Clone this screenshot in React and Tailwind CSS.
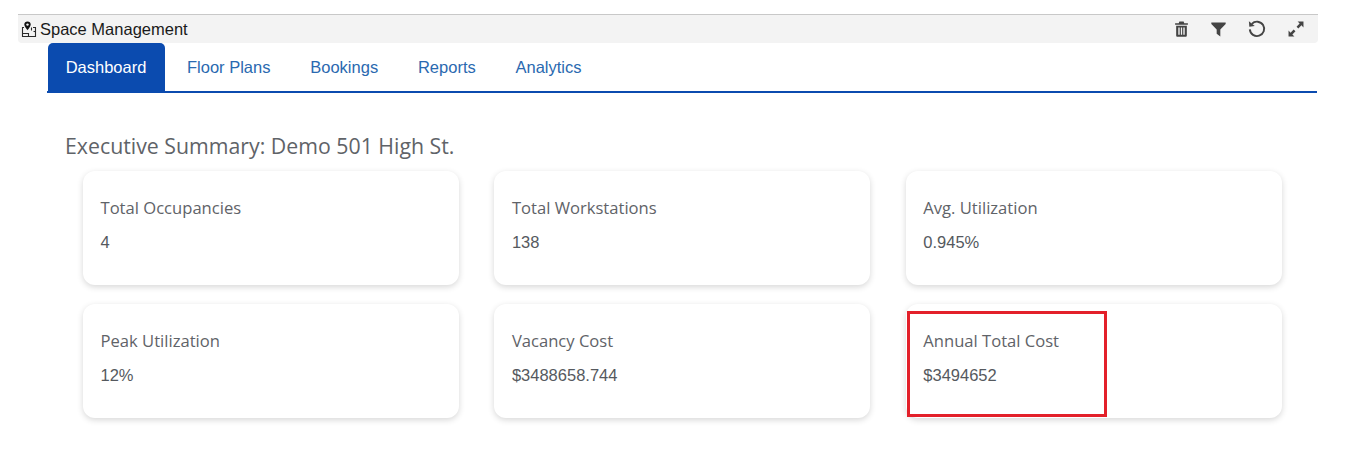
import * as React from "react";

// data
const cards = [
  { label: "Total Occupancies", value: "4" },
  { label: "Total Workstations", value: "138" },
  { label: "Avg. Utilization", value: "0.945%" },
  { label: "Peak Utilization", value: "12%" },
  { label: "Vacancy Cost", value: "$3488658.744" },
  { label: "Annual Total Cost", value: "$3494652", marked: true },
];

const tabs = ["Floor Plans", "Bookings", "Reports", "Analytics"];

const SpaceIcon = () => (
  <svg width="16" height="17" viewBox="0 0 16 17" fill="none" stroke="#2b2b2b" strokeWidth="1.1">
    <path d="M3 6.5H1.5V15.5H14.5V6.5H12" />
    <path d="M1.5 12.5H7.5V15.5" />
    <path d="M10.5 9.5V6.5" />
    <path d="M12.5 10.5H14.5" />
    <path
      d="M6.5 0.5C4.6 0.5 3.3 1.8 3.3 3.6C3.3 5.7 6.5 9.2 6.5 9.2C6.5 9.2 9.7 5.7 9.7 3.6C9.7 1.8 8.4 0.5 6.5 0.5Z"
      fill="#111"
      stroke="none"
    />
    <circle cx="6.5" cy="3.6" r="1.2" fill="#f3f3f3" stroke="none" />
  </svg>
);

const TrashIcon = () => (
  <svg width="15" height="16" viewBox="0 0 14 15" fill="#444">
    <path d="M5 0.5H9L9.6 2H13V3.6H1V2H4.4Z" />
    <path
      fillRule="evenodd"
      d="M2 4.5H12V13.5C12 14.2 11.5 14.7 10.8 14.7H3.2C2.5 14.7 2 14.2 2 13.5ZM4 6V13H5.3V6ZM6.4 6V13H7.6V6ZM8.7 6V13H10V6Z"
    />
  </svg>
);

const FilterIcon = () => (
  <svg width="15" height="15" viewBox="0 0 14 14" fill="#444">
    <path d="M0.3 0.5H13.7V1.8L8.7 7V13.5L5.3 11V7L0.3 1.8Z" />
  </svg>
);

const ResetIcon = () => (
  <svg width="18" height="18" viewBox="0 0 16 16" fill="none" stroke="#444" strokeWidth="1.7">
    <path d="M3.4 3.4A6.4 6.4 0 1 1 1.6 8.4" />
    <path d="M0.8 1.2L1.2 6L6 5.4Z" fill="#444" stroke="none" />
  </svg>
);

const ExpandIcon = () => (
  <svg width="16" height="16" viewBox="0 0 15 15" fill="#444">
    <path d="M9 0.5H14.5V6L12.6 4.1L9.7 7L8 5.3L10.9 2.4Z" />
    <path d="M6 14.5H0.5V9L2.4 10.9L5.3 8L7 9.7L4.1 12.6Z" />
  </svg>
);

const Card = ({ label, value, marked }) => (
  <div className="relative h-[114px] rounded-xl bg-white pl-[17.5px] pt-[26px] shadow-[0_2px_6px_rgba(0,0,0,0.16)]">
    <p className="font-['Open_Sans',sans-serif] text-[16.6px] leading-[22px] text-[#5f6368]">{label}</p>
    <p className="mt-[12px] font-['Liberation_Sans',sans-serif] text-[16.5px] leading-[22px] text-[#55595e]">
      {value}
    </p>
    {marked && (
      <div className="absolute left-px top-[7px] h-[106px] w-[200px] border-[3px] border-[#e3202a]" />
    )}
  </div>
);

export default function App() {
  return (
    <div className="min-h-[458px] bg-white pt-[14px] pl-[18px] font-['Liberation_Sans',sans-serif]">
      {/* title bar */}
      <div className="flex h-[29px] w-[1300px] items-center justify-between rounded-b-sm border-t border-[#c8c8c8] bg-[#f3f3f3] pl-[3px]">
        <div className="flex items-center gap-[3px]">
          <SpaceIcon />
          <span className="text-[16.5px] leading-none text-[#1a1a1a]">Space Management</span>
        </div>
        <div className="flex items-center gap-[22px] pr-[14px]">
          <TrashIcon />
          <FilterIcon />
          <ResetIcon />
          <ExpandIcon />
        </div>
      </div>

      {/* tabs */}
      <div className="ml-[29px] flex h-[50px] w-[1270px] border-b-2 border-[#0b4baf] pl-px">
        <div className="flex h-[48px] w-[117px] items-center justify-center rounded-t-[5px] bg-[#0b4baf] pt-[1px] pr-[1px] text-[16.5px] text-white">
          Dashboard
        </div>
        <div className="flex h-[48px] items-center gap-[39.8px] pl-[22px] pt-[1px] text-[16.5px] text-[#2a69b0]">
          {tabs.map((tab) => (
            <span key={tab}>{tab}</span>
          ))}
        </div>
      </div>

      {/* summary */}
      <h2 className="ml-[47px] mt-[38px] font-['Open_Sans',sans-serif] text-[21.3px] leading-[30px] font-normal text-[#5f6368]">
        Executive Summary: Demo 501 High St.
      </h2>
      <div className="ml-[65px] mt-[10px] grid w-[1199px] grid-cols-[376px_376px_376px] gap-x-[35.4px] gap-y-[19px]">
        {cards.map((card) => (
          <Card key={card.label} {...card} />
        ))}
      </div>
    </div>
  );
}
